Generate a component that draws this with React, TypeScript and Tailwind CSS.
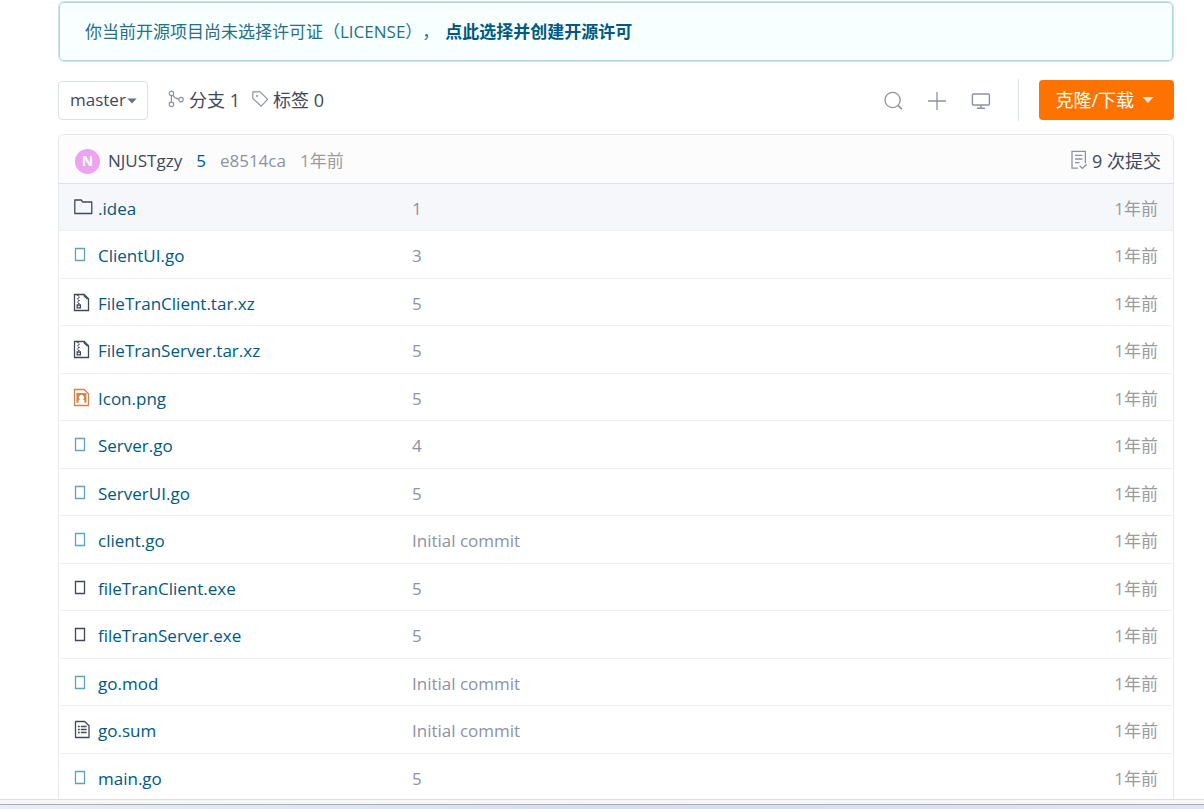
import React from "react";

type Kind = "folder" | "code" | "binary" | "archive" | "image" | "text";

const files: { name: string; kind: Kind; message: string }[] = [
  { name: ".idea", kind: "folder", message: "1" },
  { name: "ClientUI.go", kind: "code", message: "3" },
  { name: "FileTranClient.tar.xz", kind: "archive", message: "5" },
  { name: "FileTranServer.tar.xz", kind: "archive", message: "5" },
  { name: "Icon.png", kind: "image", message: "5" },
  { name: "Server.go", kind: "code", message: "4" },
  { name: "ServerUI.go", kind: "code", message: "5" },
  { name: "client.go", kind: "code", message: "Initial commit" },
  { name: "fileTranClient.exe", kind: "binary", message: "5" },
  { name: "fileTranServer.exe", kind: "binary", message: "5" },
  { name: "go.mod", kind: "code", message: "Initial commit" },
  { name: "go.sum", kind: "text", message: "Initial commit" },
  { name: "main.go", kind: "code", message: "5" },
];

function FileIcon({ kind }: { kind: Kind }) {
  const common = {
    width: 20,
    height: 20,
    viewBox: "0 0 20 20",
    fill: "none",
    className: "mb-0.5 shrink-0",
    "aria-hidden": true,
  } as const;
  switch (kind) {
    case "folder":
      return (
        <svg {...common} stroke="#40485b" strokeWidth="1.3" strokeLinejoin="round">
          <path d="M1.8 15.5V2h6.4l1.6 2h9v11.5z" />
        </svg>
      );
    case "archive":
      return (
        <svg {...common} stroke="#40485b" strokeWidth="1.3">
          <path d="M1.5 1.5h9.6l4.4 4.2v11.8h-14z" />
          <path d="M11.2 1.5v1.4l2.8 2.8h1.5" />
          <path d="M4 2.6h1.8M5 4.2h1.8M4 5.8h1.8M5 7.4h1.8M4 9h1.8M5 10.6h1.6" strokeWidth="1" />
          <path d="M4.2 12h3.2v2.8H4.2z" />
        </svg>
      );
    case "image":
      return (
        <svg {...common} stroke="#d08450" strokeWidth="1.3">
          <path d="M1.5 1.5h9.6l4.4 4.2v11.8h-14z" />
          <path
            d="M3.4 5h10v9.8h-2v-2.2l-1.3-1.2a2.5 2.5 0 1 0-3.2 0l-1.4 1.2v2.2H3.4z"
            fill="#d08450"
            stroke="none"
          />
        </svg>
      );
    case "text":
      return (
        <svg {...common} stroke="#40485b" strokeWidth="1.3">
          <path d="M2.5 1.5h9.2l4.3 4.2v11.8H2.5z" strokeLinejoin="round" />
          <path d="M5 6.5h1.8M7.8 6.5h5.8M5 9.5h1.8M7.8 9.5h5.8M5 12.5h1.8M7.8 12.5h5.8" strokeWidth="1.3" />
        </svg>
      );
    default:
      return (
        <svg {...common} stroke={kind === "code" ? "#5fa3bd" : "#40485b"} strokeWidth="1.3">
          <path d="M2.5 3.5h9v12h-9z" />
        </svg>
      );
  }
}

function Caret({ className }: { className: string }) {
  return (
    <svg width="12" height="6" viewBox="0 0 12 6" fill="currentColor" className={className} aria-hidden="true">
      <path d="M0.4 0h11.2L6 6z" />
    </svg>
  );
}

export default function App() {
  return (
    <div className="flex h-screen flex-col bg-white font-['Open_Sans','Noto_Sans_CJK_SC',sans-serif] text-[17px] leading-6 text-[#40485b]">
      <main className="min-h-0 flex-1 overflow-hidden pt-px pr-[30px] pl-[58px]">
        <div className="flex h-[61px] items-center rounded-md border border-[#cfe5ea] bg-[#f8ffff] px-[26px] text-[#276f86] inset-ring inset-ring-[#a9d5de]">
          <p className="[text-spacing-trim:space-all]">
            你当前开源项目尚未选择许可证（LICENSE），
            <a href="#license" className="ml-1.5 font-bold text-[#005980]">
              点此选择并创建开源许可
            </a>
          </p>
        </div>

        <div className="mt-[18px] flex h-10 items-center">
          <div className="relative">
            <select
              aria-label="分支"
              className="h-[39px] w-[90px] appearance-none rounded-sm border border-[#dce3e8] bg-white pl-[11px]"
            >
              <option>master</option>
            </select>
            <Caret className="pointer-events-none absolute top-[17px] right-[11px] w-[10px] text-[#6b7185]" />
          </div>
          <a href="#branches" className="ml-5 flex items-center gap-1 text-lg">
            <svg width="17" height="18" viewBox="0 0 17 18" fill="none" stroke="#8c92a4" strokeWidth="1.2" className="mb-0.5" aria-hidden="true">
              <circle cx="3.4" cy="3.4" r="2.2" />
              <circle cx="3.4" cy="14.4" r="2.2" />
              <circle cx="13" cy="9.6" r="2.2" />
              <path d="M3.4 5.6v6.6M4.8 5.2c1.4 2.4 2.8 3.4 6 4" />
            </svg>
            分支 1
          </a>
          <a href="#tags" className="ml-[11px] flex items-center gap-1 text-lg">
            <svg width="18" height="18" viewBox="0 0 18 18" fill="none" stroke="#8c92a4" strokeWidth="1.2" strokeLinejoin="round" className="mb-0.5" aria-hidden="true">
              <path d="M1.8 1.8h7.4l7.4 7.6-6.4 6.8-8.4-7.8z" />
              <circle cx="6" cy="6" r="1" fill="#8c92a4" stroke="none" />
            </svg>
            标签 0
          </a>

          <div className="ml-auto flex items-center gap-6 pt-0.5 text-[#8c92a4]">
            <button type="button" aria-label="搜索">
              <svg width="20" height="20" viewBox="0 0 20 20" fill="none" stroke="currentColor" strokeWidth="1.3" aria-hidden="true">
                <circle cx="9.6" cy="9" r="7.6" />
                <path d="M15 14.4l4 3.8" strokeWidth="1.6" />
              </svg>
            </button>
            <button type="button" aria-label="新建">
              <svg width="20" height="20" viewBox="0 0 20 20" stroke="currentColor" strokeWidth="1.3" aria-hidden="true">
                <path d="M1 10h18M10 1v18" />
              </svg>
            </button>
            <button type="button" aria-label="在线编辑">
              <svg width="20" height="20" viewBox="0 0 20 20" fill="none" stroke="currentColor" strokeWidth="1.4" aria-hidden="true">
                <rect x="1.4" y="3" width="17" height="11" rx="1" />
                <path d="M10 14v3M6 17.2h8" />
              </svg>
            </button>
          </div>
          <div className="ml-[27px] h-[42px] border-l border-[#dce3e8]" />
          <button
            type="button"
            className="ml-5 flex h-10 items-center gap-2 rounded-sm bg-[#fe7300] pr-5 pl-4 text-lg text-white"
          >
            克隆/下载
            <Caret className="text-[#ffe3cc]" />
          </button>
        </div>

        <section className="mt-[14px] rounded-t-md border border-[#e3e9ed]">
          <header className="flex h-12 items-center rounded-t-md bg-[#fcfcfc] pt-1 pr-3 pl-4">
            <span className="mr-2 flex size-[25px] items-center justify-center rounded-full bg-[#eea2f2] text-sm font-bold text-white">
              N
            </span>
            <a href="#author">NJUSTgzy</a>
            <a href="#commit" className="ml-[14px] text-[#005980]">5</a>
            <a href="#sha" className="ml-[14px] text-[#8c92a4]">e8514ca</a>
            <span className="ml-[14px] text-[#9b9b9b]">1年前</span>
            <a href="#commits" className="ml-auto flex items-center gap-1 text-lg">
              <svg width="18" height="20" viewBox="0 0 18 20" fill="none" stroke="#8c92a4" strokeWidth="1.3" className="mb-0.5" aria-hidden="true">
                <path d="M8 18.2H2V1.4h13.4v11.8M5 5.4h7.4M5 9h7.4M5 12.6h4.6" />
                <path d="M9.6 15.8l2.8 2.6 4.2-4.2" />
              </svg>
              9 次提交
            </a>
          </header>
          <table className="w-full table-fixed border-collapse">
            <tbody>
              {files.map((file) => (
                <tr
                  key={file.name}
                  className="border-t border-[#eef1f5] odd:h-[47px] even:h-12 first:border-[#dce3e8] first:bg-[#f6f7fb]"
                >
                  <td className="w-[353px] p-0 pt-[3px] pl-[14px]">
                    <a href={"#" + file.name} className="flex items-center gap-[5px] text-[#005980]">
                      <FileIcon kind={file.kind} />
                      {file.name}
                    </a>
                  </td>
                  <td className="p-0 pt-[3px] text-[#8c92a4]">{file.message}</td>
                  <td className="w-[120px] p-0 pt-[3px] pr-[15px] text-right text-[#9b9b9b]">1年前</td>
                </tr>
              ))}
            </tbody>
          </table>
        </section>
      </main>
      <footer className="shrink-0">
        <div className="h-[5px] border-t border-[#dddddd] bg-[#f6f6f4]" />
        <div className="h-[5px] border-t border-[#a9adb8] bg-linear-to-r from-[#e6eef8] via-[#d3dff5] to-[#dfe3f6]" />
      </footer>
    </div>
  );
}
